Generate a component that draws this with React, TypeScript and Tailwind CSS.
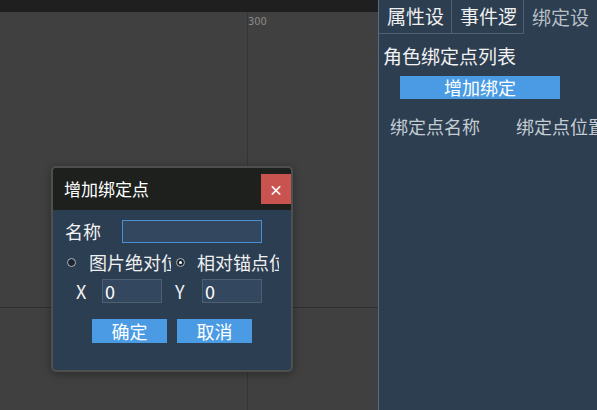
const font = { fontFamily: '"Noto Sans CJK SC", "Noto Sans", sans-serif' };

const Canvas = () => {
  return (
    <div className="relative flex-1 bg-[#404040] overflow-hidden">
      {/* ruler marks */}
      <div className="absolute left-[247px] top-0 h-full w-px bg-[#353535]" />
      <div className="absolute left-0 top-[295px] w-full h-px bg-[#2f2f2f]" />
      <span
        className="absolute left-[248px] top-[4px] text-[11px] leading-none text-[#8a8a8a]"
        style={{ fontFamily: '"DejaVu Sans Condensed", "Liberation Sans", sans-serif' }}
      >
        300
      </span>
      <BindDialog />
    </div>
  );
};

const BindDialog = () => {
  return (
    <div className="absolute left-[51px] top-[154px] w-[242px] h-[206px] rounded-[5px] border-2 border-[#4e5050] bg-[#2b3e52] shadow-[0_2px_8px_rgba(0,0,0,0.35)] overflow-hidden flex flex-col">
      <div className="h-[42px] bg-[#1d201d] flex items-center justify-between pl-[11px]">
        <span className="text-[17px] text-white">增加绑定点</span>
        <button className="w-[30px] h-[30px] bg-[#c9534f] text-white text-[14px] font-bold flex items-center justify-center leading-none">
          ×
        </button>
      </div>
      <div className="flex flex-col pl-[12px] pt-[10px]">
        <div className="flex items-center h-[23px]">
          <span className="text-[18px] text-[#f2f2f2] w-[57px]">名称</span>
          <div className="w-[140px] h-[23px] border border-[#4a8fd6] bg-[#33485e]" />
        </div>
        <div className="flex items-center h-[24px] mt-[7px]">
          <label className="flex items-center w-[106px] overflow-hidden whitespace-nowrap">
            <span className="w-[9px] h-[9px] rounded-full border border-[#aeb6be] bg-[#1c2530] shrink-0 ml-[2px]" />
            <span className="text-[18px] text-[#f0f0f0] ml-[13px]">图片绝对位置</span>
          </label>
          <label className="flex items-center w-[103px] overflow-hidden whitespace-nowrap ml-[5px]">
            <span className="w-[9px] h-[9px] rounded-full border border-[#aeb6be] bg-[#1c2530] shrink-0 flex items-center justify-center">
              <span className="w-[3px] h-[3px] rounded-full bg-white" />
            </span>
            <span className="text-[18px] text-[#f0f0f0] ml-[12px]">相对锚点位置</span>
          </label>
        </div>
        <div className="flex items-center h-[24px] mt-[5px]">
          <span className="text-[18px] text-[#f2f2f2] ml-[11px] w-[26px]">X</span>
          <div className="w-[60px] h-[24px] border border-[#4d5f71] bg-[#33485e] text-[18px] text-white leading-[22px] pl-[2px]">
            0
          </div>
          <span className="text-[18px] text-[#f2f2f2] ml-[13px] w-[27px]">Y</span>
          <div className="w-[60px] h-[24px] border border-[#4d5f71] bg-[#33485e] text-[18px] text-white leading-[22px] pl-[2px]">
            0
          </div>
        </div>
        <div className="flex items-center mt-[16px] ml-[27px] gap-[10px]">
          <button className="w-[75px] h-[24px] bg-[#4a9be4] text-white text-[18px] leading-[24px]">确定</button>
          <button className="w-[75px] h-[24px] bg-[#4a9be4] text-white text-[18px] leading-[24px]">取消</button>
        </div>
      </div>
    </div>
  );
};

const SidePanel = () => {
  return (
    <div className="w-[219px] border-l border-[#5a6b7c] bg-[#2c3e50] flex flex-col overflow-hidden">
      <div className="flex h-[34px] shrink-0">
        <div className="w-[73px] border-r border-b border-[#4f6174] flex items-center pl-[8px] text-[19px] text-[#f0f0f0] whitespace-nowrap">
          属性设
        </div>
        <div className="w-[72px] border-r border-b border-[#4f6174] flex items-center pl-[8px] text-[19px] text-[#f0f0f0] whitespace-nowrap overflow-hidden">
          事件逻
        </div>
        <div className="flex-1 flex items-center pl-[8px] text-[19px] text-[#b7bec6] whitespace-nowrap overflow-hidden">
          绑定设
        </div>
      </div>
      <div className="pl-[4px] pt-[10px] text-[19px] text-[#f2f2f2] leading-[24px] whitespace-nowrap">
        角色绑定点列表
      </div>
      <div className="pl-[21px] mt-[8px]">
        <button className="w-[160px] h-[23px] bg-[#4a9be4] text-white text-[18px] leading-[23px]">增加绑定</button>
      </div>
      <div className="flex mt-[13px] pl-[11px] text-[18px] text-[#c5ccd3] whitespace-nowrap gap-[36px]">
        <span>绑定点名称</span>
        <span>绑定点位置</span>
      </div>
    </div>
  );
};

export default function App() {
  return (
    <div className="w-[597px] h-[410px] flex overflow-hidden bg-[#2c3e50]" style={font}>
      <div className="w-[378px] flex flex-col">
        <div className="h-[12px] bg-[#1f1f1f] shrink-0" />
        <Canvas />
      </div>
      <SidePanel />
    </div>
  );
}
